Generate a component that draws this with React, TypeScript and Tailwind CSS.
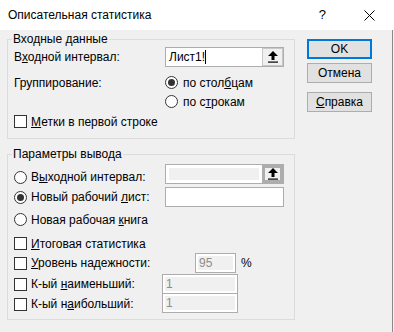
import { ReactNode } from "react"

function UploadIcon() {
  return (
    <svg width="10" height="12" viewBox="0 0 10 12">
      <path d="M5 0 L10 5 L6.5 5 L6.5 9 L3.5 9 L3.5 5 L0 5 Z" fill="#000" />
      <rect x="0" y="10.5" width="10" height="1.2" fill="#000" />
    </svg>
  )
}

function Radio({ checked }: { checked?: boolean }) {
  return (
    <span className="w-[13px] h-[13px] rounded-full border border-[#333] bg-white flex items-center justify-center shrink-0">
      {checked && <span className="w-[7px] h-[7px] rounded-full bg-[#333]" />}
    </span>
  )
}

function Checkbox() {
  return <span className="w-[13px] h-[13px] border border-[#333] bg-white shrink-0" />
}

function GroupBox({
  title,
  className,
  children,
}: {
  title: string
  className: string
  children: ReactNode
}) {
  return (
    <div className={`relative border border-[#dcdcdc] w-[288px] ${className}`}>
      <span className="absolute -top-[8px] left-[4px] px-[1px] bg-[#f0f0f0] leading-[14px]">
        {title}
      </span>
      {children}
    </div>
  )
}

function RangeInput({ value, disabled }: { value?: string; disabled?: boolean }) {
  return (
    <div className="w-[119px] h-[20px] border border-[#adadad] bg-white flex">
      {disabled ? (
        <div className="flex-1 p-[3px]">
          <div className="h-full bg-[#f0f0f0]" />
        </div>
      ) : (
        <div className="flex-1 flex items-center pl-[3px] leading-[14px]">
          {value}
          <span className="w-[1px] h-[14px] bg-black" />
        </div>
      )}
      <div
        className={`w-[21px] flex items-center justify-center ${
          disabled
            ? "border-[3px] border-[#adadad] bg-[#f0f0f0]"
            : "border border-[#c8c8c8] bg-[#f0f0f0]"
        }`}
      >
        <UploadIcon />
      </div>
    </div>
  )
}

function DisabledInput({ value, width }: { value: string; width: string }) {
  return (
    <div className={`${width} h-[20px] border border-[#adadad] bg-white p-[2px]`}>
      <div className="h-full bg-[#f0f0f0] text-[#8c8c8c] leading-[14px] pl-[1px]">
        {value}
      </div>
    </div>
  )
}

function DialogButton({
  children,
  isDefault,
  className,
}: {
  children: ReactNode
  isDefault?: boolean
  className?: string
}) {
  return (
    <div
      className={`w-[65px] h-[20px] bg-[#e1e1e1] flex items-center justify-center ${
        isDefault ? "border-2 border-[#0078d7]" : "border border-[#adadad]"
      } ${className || ""}`}
    >
      {children}
    </div>
  )
}

export default function App() {
  return (
    <div className="w-[394px] h-[332px] bg-[#f0f0f0] overflow-hidden text-[12px] text-black font-['Liberation_Sans',Arial,sans-serif]">
      <div className="h-[30px] bg-white flex items-center pl-[8px]">
        <span>Описательная статистика</span>
        <span className="ml-auto mr-[38px] text-[13px]">?</span>
        <svg width="11" height="11" viewBox="0 0 11 11" className="mr-[19px]">
          <path d="M0.5 0.5 L10.5 10.5 M10.5 0.5 L0.5 10.5" stroke="#000" strokeWidth="1" />
        </svg>
      </div>

      <div className="w-[393px] h-[302px] flex border-r border-[#8a8a8a]">
        <div className="pl-[7px] pt-[9px] flex flex-col">
          <GroupBox title="Входные данные" className="h-[100px]">
            <div className="mt-[7px] h-[20px] flex items-center">
              <span className="w-[157px] pl-[6px]">
                В<u>х</u>одной интервал:
              </span>
              <RangeInput value="Лист1!" />
            </div>
            <div className="mt-[6px] h-[19px] flex items-center">
              <span className="w-[157px] pl-[6px]">Группирование:</span>
              <Radio checked />
              <span className="ml-[5px]">
                по стол<u>б</u>цам
              </span>
            </div>
            <div className="h-[19px] flex items-center pl-[157px]">
              <Radio />
              <span className="ml-[5px]">
                по с<u>т</u>рокам
              </span>
            </div>
            <div className="mt-[1px] h-[19px] flex items-center pl-[6px]">
              <Checkbox />
              <span className="ml-[4px]">
                <u>М</u>етки в первой строке
              </span>
            </div>
          </GroupBox>

          <GroupBox title="Параметры вывода" className="h-[166px] mt-[15px]">
            <div className="mt-[9px] h-[20px] flex items-center">
              <div className="w-[157px] pl-[6px] mt-[6px] flex items-center">
                <Radio />
                <span className="ml-[4px]">
                  В<u>ы</u>ходной интервал:
                </span>
              </div>
              <RangeInput disabled />
            </div>
            <div className="mt-[3px] h-[20px] flex items-center">
              <div className="w-[157px] pl-[6px] flex items-center">
                <Radio checked />
                <span className="ml-[4px]">
                  Новый рабочий <u>л</u>ист:
                </span>
              </div>
              <div className="w-[119px] h-[20px] border border-[#adadad] bg-white" />
            </div>
            <div className="mt-[3px] h-[19px] flex items-center pl-[6px]">
              <Radio />
              <span className="ml-[4px]">
                Новая рабочая <u>к</u>нига
              </span>
            </div>
            <div className="mt-[5px] h-[19px] flex items-center pl-[6px]">
              <Checkbox />
              <span className="ml-[4px]">
                <u>И</u>тоговая статистика
              </span>
            </div>
            <div className="h-[20px] flex items-center">
              <div className="w-[187px] pl-[6px] flex items-center">
                <Checkbox />
                <span className="ml-[4px]">
                  <u>У</u>ровень надежности:
                </span>
              </div>
              <DisabledInput value="95" width="w-[41px]" />
              <span className="ml-[5px]">%</span>
            </div>
            <div className="mt-[1px] h-[20px] flex items-center">
              <div className="w-[154px] pl-[6px] flex items-center">
                <Checkbox />
                <span className="ml-[4px]">
                  К-ый <u>н</u>аименьший:
                </span>
              </div>
              <DisabledInput value="1" width="w-[76px]" />
            </div>
            <div className="-mt-[1px] h-[20px] flex items-center">
              <div className="w-[154px] pl-[6px] mt-[2px] flex items-center">
                <Checkbox />
                <span className="ml-[4px]">
                  К-ый н<u>а</u>ибольший:
                </span>
              </div>
              <DisabledInput value="1" width="w-[76px]" />
            </div>
          </GroupBox>
        </div>

        <div className="ml-[12px] pt-[9px] flex flex-col">
          <DialogButton isDefault>OK</DialogButton>
          <DialogButton className="mt-[4px]">Отмена</DialogButton>
          <DialogButton className="mt-[9px]">
            <span>
              <u>С</u>правка
            </span>
          </DialogButton>
        </div>
      </div>
    </div>
  )
}
